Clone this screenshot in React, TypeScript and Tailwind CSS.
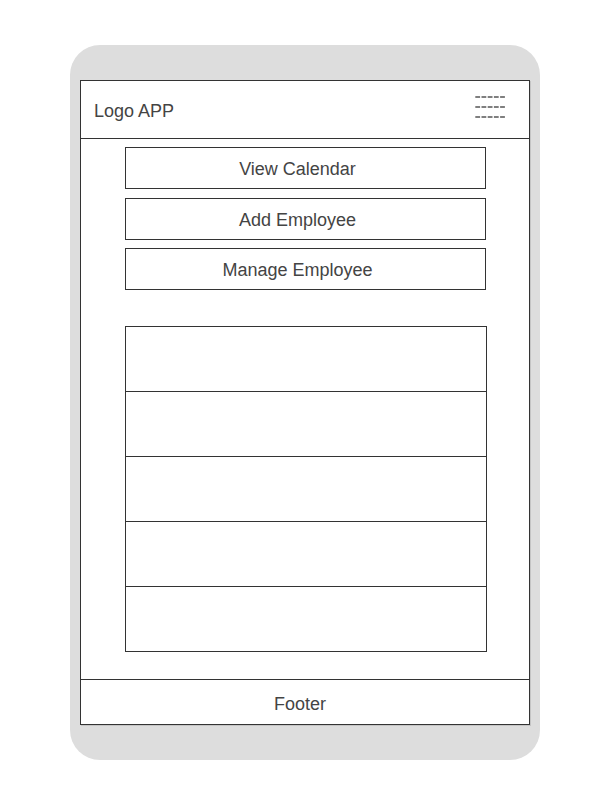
import React from "react";

const menuItems = ["View Calendar", "Add Employee", "Manage Employee"];
const rows = [1, 2, 3, 4, 5];

const MenuIcon: React.FC = () => (
	<svg width="30" height="22" viewBox="0 0 30 22" className="block">
		{[1, 11, 21].map((y) => (
			<line
				key={y}
				x1="0.3"
				y1={y}
				x2="30"
				y2={y}
				stroke="#555"
				strokeWidth="1.5"
				strokeDasharray="4.8 1.4"
			/>
		))}
	</svg>
);

const App: React.FC = () => {
	return (
		<div className="min-h-screen w-[610px] bg-white pt-[45px] pl-[70px] font-['Liberation_Sans',Arial,sans-serif] text-[#444]">
			<div className="w-[470px] h-[715px] rounded-[30px] bg-[#dddddd] pt-[35px] pl-[10px]">
				<div className="w-[450px] h-[645px] border border-[#333] bg-white flex flex-col shadow-[1px_1px_0_#c4c4c4]">
					<div className="h-[58px] shrink-0 border-b border-[#333] flex justify-between pl-[13px] pr-[24px]">
						<span className="self-center text-[18px] leading-none pt-[2px]">Logo APP</span>
						<div className="mt-[15px]">
							<MenuIcon />
						</div>
					</div>

					<div className="flex flex-col items-start pt-[8px] pl-[44px]">
						{menuItems.map((item, i) => (
							<div
								key={item}
								className={`w-[361px] h-[42px] border border-[#333] flex items-center justify-center pr-[16px] pt-[3px] text-[18px] ${
									i === 0 ? "" : i === 1 ? "mt-[9px]" : "mt-[8px]"
								}`}
							>
								{item}
							</div>
						))}

						<div className="w-[362px] mt-[36px] border border-[#333] flex flex-col">
							{rows.map((r) => (
								<div
									key={r}
									className={r === 1 ? "h-[64px]" : "h-[65px] border-t border-[#333]"}
								/>
							))}
						</div>
					</div>

					<div className="mt-auto h-[45px] border-t border-[#333] flex items-center justify-center pr-[10px] pt-[4px] text-[18px]">
						Footer
					</div>
				</div>
			</div>
		</div>
	);
};

export default App;
